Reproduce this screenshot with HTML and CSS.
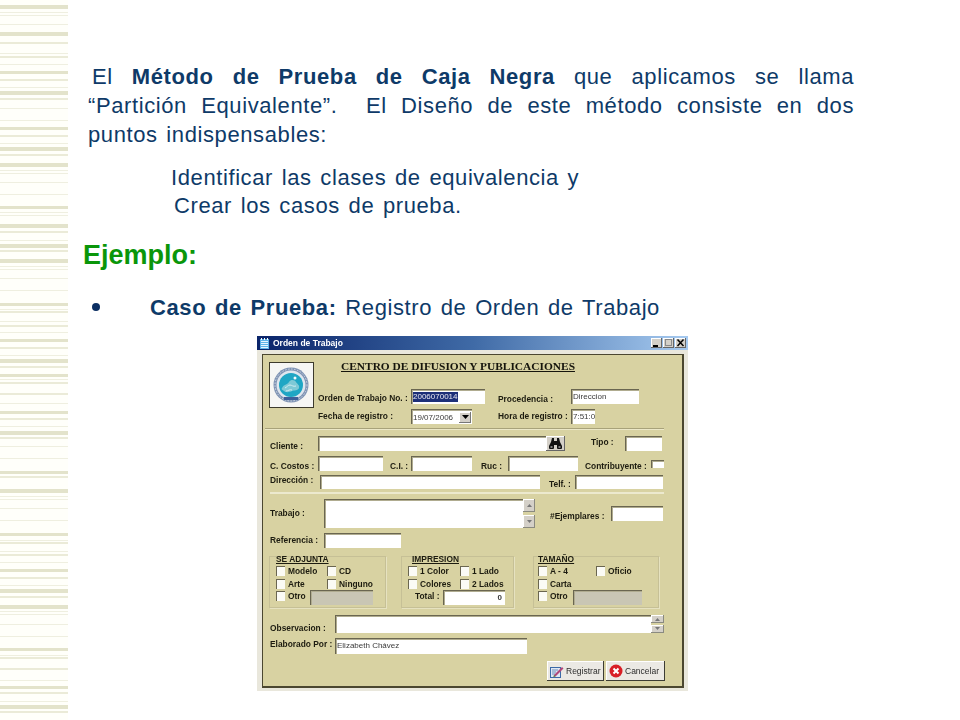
FILE: index.html
```html
<!DOCTYPE html>
<html lang="es">
<head>
<meta charset="utf-8">
<title>Partición Equivalente</title>
<link rel="stylesheet" href="styles.css">
</head>
<body>
<div class="slide">
  <svg class="stripes" width="68" height="720" viewBox="0 0 68 720" shape-rendering="crispEdges" aria-hidden="true">
    <g fill="#e3e3cb">
      <rect y="5" width="68" height="4"/><rect y="32" width="68" height="4"/><rect y="91" width="68" height="4"/><rect y="147" width="68" height="4"/><rect y="163" width="68" height="4"/><rect y="224" width="68" height="4"/><rect y="244" width="68" height="4"/><rect y="259" width="68" height="4"/><rect y="359" width="68" height="4"/><rect y="431" width="68" height="4"/><rect y="489" width="68" height="4"/><rect y="589" width="68" height="4"/><rect y="605" width="68" height="4"/><rect y="705" width="68" height="4"/>
      <rect y="71" width="68" height="3"/><rect y="127" width="68" height="3"/><rect y="206" width="68" height="3"/><rect y="303" width="68" height="3"/><rect y="339" width="68" height="3"/><rect y="374" width="68" height="3"/><rect y="411" width="68" height="3"/><rect y="471" width="68" height="3"/><rect y="533" width="68" height="3"/><rect y="569" width="68" height="3"/><rect y="648" width="68" height="3"/><rect y="686" width="68" height="3"/>
    </g>
    <g fill="#ebebd8">
      <rect y="42" width="68" height="2"/><rect y="56" width="68" height="2"/><rect y="79" width="68" height="2"/><rect y="98" width="68" height="2"/><rect y="135" width="68" height="2"/><rect y="154" width="68" height="2"/><rect y="231" width="68" height="2"/><rect y="250" width="68" height="2"/><rect y="311" width="68" height="2"/><rect y="325" width="68" height="2"/><rect y="347" width="68" height="2"/><rect y="366" width="68" height="2"/><rect y="382" width="68" height="2"/><rect y="393" width="68" height="2"/><rect y="418" width="68" height="2"/><rect y="437" width="68" height="2"/><rect y="476" width="68" height="2"/><rect y="542" width="68" height="2"/><rect y="554" width="68" height="2"/><rect y="577" width="68" height="2"/><rect y="596" width="68" height="2"/><rect y="657" width="68" height="2"/><rect y="668" width="68" height="2"/><rect y="692" width="68" height="2"/><rect y="711" width="68" height="2"/>
    </g>
    <g fill="#efefe0">
      <rect y="12" width="68" height="1"/><rect y="15" width="68" height="1"/><rect y="24" width="68" height="1"/><rect y="53" width="68" height="1"/><rect y="64" width="68" height="1"/><rect y="87" width="68" height="1"/><rect y="108" width="68" height="1"/><rect y="120" width="68" height="1"/><rect y="143" width="68" height="1"/><rect y="170" width="68" height="1"/><rect y="173" width="68" height="1"/><rect y="182" width="68" height="1"/><rect y="194" width="68" height="1"/><rect y="212" width="68" height="1"/><rect y="215" width="68" height="1"/><rect y="240" width="68" height="1"/><rect y="266" width="68" height="1"/><rect y="269" width="68" height="1"/><rect y="278" width="68" height="1"/><rect y="290" width="68" height="1"/><rect y="309" width="68" height="1"/><rect y="321" width="68" height="1"/><rect y="332" width="68" height="1"/><rect y="355" width="68" height="1"/><rect y="379" width="68" height="1"/><rect y="403" width="68" height="1"/><rect y="426" width="68" height="1"/><rect y="446" width="68" height="1"/><rect y="458" width="68" height="1"/><rect y="496" width="68" height="1"/><rect y="499" width="68" height="1"/><rect y="508" width="68" height="1"/><rect y="520" width="68" height="1"/><rect y="540" width="68" height="1"/><rect y="551" width="68" height="1"/><rect y="562" width="68" height="1"/><rect y="585" width="68" height="1"/><rect y="611" width="68" height="1"/><rect y="614" width="68" height="1"/><rect y="624" width="68" height="1"/><rect y="636" width="68" height="1"/><rect y="655" width="68" height="1"/><rect y="680" width="68" height="1"/><rect y="701" width="68" height="1"/>
    </g>
  </svg>

  <main class="content">
    <div class="intro">
      <p class="line first">El <b>Método de Prueba de Caja Negra</b> que aplicamos se llama</p>
      <p class="line">“Partición Equivalente”.&nbsp; El Diseño de este método consiste en dos</p>
      <p class="line last">puntos indispensables:</p>
    </div>
    <div class="steps">
      <p>Identificar las clases de equivalencia y</p>
      <p class="step-two">Crear los casos de prueba.</p>
    </div>
    <h2 class="example">Ejemplo:</h2>
    <div class="case">
      <span class="bullet"></span>
      <p><b>Caso de Prueba:</b> Registro de Orden de Trabajo</p>
    </div>

    <section class="window">
      <header class="titlebar">
        <svg class="app-icon" width="9" height="11" viewBox="0 0 9 11" aria-hidden="true">
          <rect x="0" y="1" width="9" height="10" fill="#5fb4e8"/>
          <path d="M1 3.5h7M1 5.5h7M1 7.5h7M1 9.5h7" stroke="#e8f6ff" stroke-width="1"/>
          <path d="M1.5 0v2M4.5 0v2M7.5 0v2" stroke="#fff" stroke-width="1"/>
        </svg>
        <span class="title-text">Orden de Trabajo</span>
        <span class="win-buttons">
          <span class="win-btn"><svg width="11" height="10" viewBox="0 0 11 10"><path d="M2 8h5" stroke="#000" stroke-width="2"/></svg></span>
          <span class="win-btn"><svg width="11" height="10" viewBox="0 0 11 10"><rect x="2.5" y="1.5" width="6" height="6" fill="none" stroke="#8a8a8a"/></svg></span>
          <span class="win-btn"><svg width="11" height="10" viewBox="0 0 11 10"><path d="M2.5 1.5l6 6.5M8.5 1.5l-6 6.500" stroke="#000" stroke-width="1.500"/></svg></span>
        </span>
      </header>

      <div class="panel">
        <div class="head">
          <div class="logo">
            <svg width="41" height="42" viewBox="0 0 41 42" aria-hidden="true">
              <circle cx="20" cy="21" r="17.500" fill="#7f94b4"/>
              <circle cx="20" cy="21" r="14.500" fill="#dfe6ee"/>
              <circle cx="20" cy="21" r="12" fill="#1fa6c4"/>
              <circle cx="20" cy="21" r="16" fill="none" stroke="#d4dae6" stroke-width="1" stroke-dasharray="1.500 1.500"/>
              <path d="M11 24c2-4 5-3 7-6s6-2 7 0 4 3 3 6-5 2-7 3-6 2-8 0-3-1-2-3z" fill="#7fc9d6"/>
              <path d="M14 24c2-1 3-3 5-3s3 2 6 1M15 27c2 0 4-2 6-1" stroke="#d2eef2" stroke-width="1" fill="none"/>
              <circle cx="24" cy="14" r="1.500" fill="#f2fafb"/>
              <rect x="13" y="33" width="14" height="3" fill="#3d5f9a"/>
            </svg>
          </div>
          <div class="head-main">
            <h3 class="org">CENTRO DE DIFUSION Y PUBLICACIONES</h3>
            <div class="row row-order">
              <label class="down-1">Orden de Trabajo No. :</label>
              <span class="field"><span class="selected">2006070014</span></span>
              <label class="pad-13 down-2">Procedencia :</label>
              <span class="field">Direccion</span>
            </div>
            <div class="row row-date">
              <label class="up-1">Fecha de registro :</label>
              <span class="field combo">19/07/2006<span class="arrow-btn"><svg width="7" height="4" viewBox="0 0 7 4"><path d="M0 0h7L3.500 4z" fill="#000"/></svg></span></span>
              <label class="pad-26 up-1">Hora de registro :</label>
              <span class="field">7:51:0</span>
            </div>
          </div>
        </div>
        <div class="sep"></div>

        <div class="body">
          <div class="row row-client">
            <label class="down-2">Cliente :</label>
            <span class="field"></span>
            <span class="btn-find">
              <svg width="13" height="11" viewBox="0 0 13 11" aria-hidden="true">
                <path d="M3 0h2v3h3V0h2l1 4 2 4v2a1 1 0 0 1-1 1H9a1 1 0 0 1-1-1V7H5v3a1 1 0 0 1-1 1H1a1 1 0 0 1-1-1V8l2-4z" fill="#111"/>
                <path d="M1.500 9h2M9.500 9h2" stroke="#eee" stroke-width="1"/>
              </svg>
            </span>
            <label class="pad-26 up-2">Tipo :</label>
            <span class="field"></span>
          </div>
          <div class="row row-costs">
            <label class="down-2">C. Costos :</label>
            <span class="field"></span>
            <label class="pad-7 down-2">C.I. :</label>
            <span class="field"></span>
            <label class="pad-9 down-2">Ruc :</label>
            <span class="field"></span>
            <label class="pad-7 down-2">Contribuyente :</label>
            <span class="field tiny"></span>
          </div>
          <div class="row row-address">
            <label class="up-2">Dirección :</label>
            <span class="field"></span>
            <label class="pad-9 down-2">Telf. :</label>
            <span class="field"></span>
          </div>
          <div class="sep-light"></div>
          <div class="row row-work">
            <label class="up-1">Trabajo :</label>
            <span class="field"></span>
            <span class="scroll">
              <span class="scroll-btn"><svg width="5" height="3" viewBox="0 0 5 3"><path d="M0 3h5L2.500 0z" fill="#777"/></svg></span>
              <span class="scroll-btn"><svg width="5" height="3" viewBox="0 0 5 3"><path d="M0 0h5L2.500 3z" fill="#777"/></svg></span>
            </span>
            <label class="pad-15 down-2">#Ejemplares :</label>
            <span class="field short"></span>
          </div>
          <div class="row row-ref">
            <label class="up-1">Referencia :</label>
            <span class="field"></span>
          </div>

          <div class="groups">
            <fieldset class="group group-a">
              <div class="group-title">SE ADJUNTA</div>
              <div class="opts"><span class="opt col"><i class="cb"></i>Modelo</span><span class="opt"><i class="cb"></i>CD</span></div>
              <div class="opts"><span class="opt col"><i class="cb"></i>Arte</span><span class="opt"><i class="cb"></i>Ninguno</span></div>
              <div class="opts"><span class="opt other"><i class="cb"></i>Otro</span><span class="field grey"></span></div>
            </fieldset>
            <fieldset class="group group-b">
              <div class="group-title">IMPRESION</div>
              <div class="opts"><span class="opt col"><i class="cb"></i>1 Color</span><span class="opt"><i class="cb"></i>1 Lado</span></div>
              <div class="opts"><span class="opt col"><i class="cb"></i>Colores</span><span class="opt"><i class="cb"></i>2 Lados</span></div>
              <div class="opts"><span class="opt total">Total :</span><span class="field number">0</span></div>
            </fieldset>
            <fieldset class="group group-c">
              <div class="group-title">TAMAÑO</div>
              <div class="opts"><span class="opt col"><i class="cb"></i>A - 4</span><span class="opt"><i class="cb"></i>Oficio</span></div>
              <div class="opts"><span class="opt col"><i class="cb"></i>Carta</span></div>
              <div class="opts"><span class="opt other"><i class="cb"></i>Otro</span><span class="field grey"></span></div>
            </fieldset>
          </div>

          <div class="row row-notes">
            <label class="down-4">Observacion :</label>
            <span class="field"></span>
            <span class="scroll">
              <span class="scroll-btn"><svg width="5" height="3" viewBox="0 0 5 3"><path d="M0 3h5L2.500 0z" fill="#777"/></svg></span>
              <span class="scroll-btn"><svg width="5" height="3" viewBox="0 0 5 3"><path d="M0 0h5L2.500 3z" fill="#777"/></svg></span>
            </span>
          </div>
          <div class="row row-author">
            <label class="up-2">Elaborado Por :</label>
            <span class="field">Elizabeth Chávez</span>
          </div>
          <div class="actions">
            <span class="action action-save">
              <svg width="14" height="13" viewBox="0 0 14 13" aria-hidden="true">
                <rect x="0.500" y="2.500" width="10" height="10" fill="#dfe8f4" stroke="#3c6aa8"/>
                <path d="M2 5h6M2 7h4M2 9h3" stroke="#6f8fbb"/>
                <path d="M4 10L12 2l1.500 1.500-8 8-2 .5z" fill="#b0487a"/>
                <path d="M4 10l-.5 2 2-.5z" fill="#4d9b3c"/>
              </svg>
              Registrar
            </span>
            <span class="action action-cancel">
              <svg width="14" height="14" viewBox="0 0 14 14" aria-hidden="true">
                <circle cx="7" cy="7" r="6.500" fill="#d81f26"/>
                <path d="M4.500 4.500l5 5M9.500 4.500l-5 5" stroke="#fff" stroke-width="2"/>
              </svg>
              Cancelar
            </span>
          </div>
        </div>
      </div>
    </section>
  </main>
</div>
</body>
</html>
```

FILE: styles.css
```css
* { box-sizing: border-box; }

html, body { margin: 0; padding: 0; }

body {
  background: #fff;
  color: #0e3a68;
  font-family: "Liberation Sans", Arial, sans-serif;
  overflow: hidden;
}

p, h2, h3 { margin: 0; }

.slide {
  display: flex;
  width: 960px;
  height: 720px;
}

.stripes {
  display: block;
  flex: none;
  background: #fffffa;
}

.content {
  flex: 1;
  padding-top: 62px;
  font-size: 22px;
  letter-spacing: 0.6px;
  word-spacing: 2px;
}

/* slide text */
.intro {
  margin-left: 20px;
  width: 766px;
}

.line {
  height: 29px;
  line-height: 29px;
  text-align: justify;
  text-align-last: justify;
}

.line.first { padding-left: 4px; }
.line.last { text-align-last: left; }

.steps {
  margin: 15px 0 0 103px;
  line-height: 28px;
}

.step-two { padding-left: 3px; }

.example {
  margin: 20px 0 0 15px;
  color: #0a960a;
  font-size: 27px;
  letter-spacing: 0;
  line-height: 30px;
}

.case {
  display: flex;
  align-items: center;
  margin-top: 24px;
  height: 28px;
  line-height: 28px;
}

.bullet {
  flex: none;
  width: 8px;
  height: 8px;
  margin: -2px 50px 0 24px;
  border-radius: 50%;
  background: #0c2f63;
}

/* screenshot of the form */
.window {
  width: 431px;
  height: 355px;
  margin: 14px 0 0 189px;
  background: #e9e7dc;
  color: #1d1c10;
  font-size: 8.400px;
  letter-spacing: 0;
  word-spacing: 0;
  filter: blur(0.3px);
}

.titlebar {
  display: flex;
  align-items: center;
  height: 14px;
  padding: 0 2px 0 3px;
  background: linear-gradient(90deg, #0a246a 0%, #3f6aa6 50%, #a6caf0 100%);
  color: #fff;
  font-size: 8.500px;
  font-weight: bold;
}

.app-icon { flex: none; }

.title-text { margin-left: 4px; }

.win-buttons {
  display: flex;
  gap: 1px;
  margin-left: auto;
}

.win-btn {
  display: flex;
  width: 11px;
  height: 10px;
  background: #d4d0c8;
  box-shadow: inset -1px -1px #666, inset 1px 1px #fff;
}

.panel {
  width: 422px;
  height: 334px;
  margin: 4px 0 0 5px;
  border: 1px solid #4b4730;
  border-width: 1px 2px 2px 1px;
  background: #d8d2a2;
}

.head { display: flex; padding-left: 6px; }

.logo {
  display: flex;
  align-items: center;
  justify-content: center;
  flex: none;
  width: 45px;
  height: 46px;
  margin-top: 7px;
  border: 1px solid #3c3a2c;
  background: #f6f6f4;
}

.head-main { margin-left: 4px; }

.org {
  margin: 5px 0 0 23px;
  color: #15140c;
  font-family: "Liberation Serif", "Times New Roman", serif;
  font-size: 11.400px;
  line-height: 12px;
  text-decoration: underline;
  white-space: nowrap;
}

.row {
  display: grid;
  align-items: center;
}

label {
  font-weight: bold;
  white-space: nowrap;
}

.pad-7 { padding-left: 7px; }
.pad-9 { padding-left: 9px; }
.pad-13 { padding-left: 13px; }
.pad-15 { padding-left: 15px; }
.pad-26 { padding-left: 26px; }

/* labels sit a little off the centre of their field; the row centres
   them, so a margin shifts them by half its value */
.down-1 { margin-top: 2px; }
.down-2 { margin-top: 4px; }
.down-4 { margin-top: 8px; }
.up-1 { margin-top: -2px; }
.up-2 { margin-top: -4px; }

.field {
  display: block;
  height: 100%;
  overflow: hidden;
  border-style: solid;
  border-width: 1px 0 0 1px;
  border-color: #6a6650;
  box-shadow: inset 1px 1px #b0ac90;
  background: #ffffff;
  color: #3a3a3a;
  font-size: 8px;
  font-weight: normal;
  line-height: 13px;
  padding-left: 1px;
  white-space: nowrap;
}

.selected {
  display: inline-block;
  background: #1d2f78;
  color: #e8e8f0;
  line-height: 10px;
}

.row-order {
  grid-template-columns: 93px 74px 86px 68px;
  height: 15px;
  margin-top: 17px;
}

.row-date {
  grid-template-columns: 93px 61px 99px 24px;
  height: 15px;
  margin-top: 5px;
}

.combo {
  display: flex;
  justify-content: space-between;
  align-items: center;
  padding-right: 1px;
}

.arrow-btn {
  display: flex;
  align-items: center;
  justify-content: center;
  width: 12px;
  height: 11px;
  background: #d4d0c8;
  box-shadow: inset -1px -1px #777, inset 1px 1px #fff;
}

.sep {
  width: 399px;
  height: 2px;
  margin: 4px 0 0 2px;
  border-top: 1px solid #a8a27a;
  border-bottom: 1px solid #ece8c8;
}

.body { padding-left: 7px; }

.row-client {
  grid-template-columns: 48px 228px 19px 60px 37px;
  height: 15px;
  margin-top: 6px;
}

.btn-find {
  display: flex;
  align-items: center;
  justify-content: center;
  height: 100%;
  background: #d4d0c8;
  box-shadow: inset -1px -1px #666, inset 1px 1px #fff;
}

.row-costs {
  grid-template-columns: 48px 65px 28px 61px 36px 70px 73px 13px;
  height: 15px;
  margin-top: 5px;
}

.tiny { height: 8px; }

.row-address {
  grid-template-columns: 50px 220px 35px 88px;
  height: 14px;
  margin-top: 4px;
}

.sep-light {
  width: 394px;
  height: 2px;
  margin-top: 3px;
  background: #ece9ce;
}

.row-work {
  grid-template-columns: 54px 199px 12px 76px 52px;
  height: 29px;
  margin-top: 5px;
}

.short { height: 15px; }

.scroll {
  display: flex;
  flex-direction: column;
  justify-content: space-between;
  height: 100%;
}

.scroll-btn {
  display: flex;
  align-items: center;
  justify-content: center;
  height: 45%;
  background: #d4d0c8;
  box-shadow: inset -1px -1px #8a8a80, inset 1px 1px #fff;
}

.row-ref {
  grid-template-columns: 54px 77px;
  height: 15px;
  margin-top: 5px;
}

.groups {
  display: flex;
  height: 52px;
  margin: 8px 0 0 -1px;
}

.group {
  min-width: 0;
  margin: 0;
  padding: 0 0 0 6px;
  border: 1px solid #c6c096;
  box-shadow: 1px 1px #e6e2c0;
  font-weight: bold;
}

.group-a { width: 117px; }
.group-b { width: 113px; margin-left: 15px; }
.group-c { width: 126px; margin-left: 19px; padding-left: 4px; }

.group-title {
  height: 9px;
  line-height: 5px;
  text-decoration: underline;
}

.group-b .group-title { margin-left: 4px; }

.opts {
  display: flex;
  height: 12.500px;
}

.opt {
  display: flex;
  align-items: flex-start;
  gap: 3px;
  line-height: 10px;
  white-space: nowrap;
}

.cb {
  flex: none;
  width: 9px;
  height: 10px;
  border-style: solid;
  border-width: 1px 0 0 1px;
  border-color: #6a6650;
  background: #fbfbf5;
}

.col { width: 51px; }
.group-b .col { width: 52px; }
.group-c .col { width: 58px; }

.other { width: 34px; }
.group-c .other { width: 35px; }

.grey {
  flex: none;
  width: 63px;
  height: 15px;
  margin-top: -1px;
  background: #c9c6b4;
}

.group-c .grey { width: 69px; }

.total {
  width: 35px;
  padding-left: 7px;
}

.number {
  flex: none;
  width: 62px;
  height: 15px;
  margin-top: -1px;
  padding-right: 3px;
  font-weight: bold;
  text-align: right;
}

.row-notes {
  grid-template-columns: 65px 316px 13px;
  height: 18px;
  margin-top: 7px;
}

.row-author {
  grid-template-columns: 65px 192px;
  height: 16px;
  margin-top: 5px;
}

.actions {
  display: flex;
  gap: 2px;
  height: 20px;
  margin: 7px 0 0 277px;
}

.action {
  display: flex;
  align-items: center;
  gap: 2px;
  height: 100%;
  padding-left: 3px;
  background: #ebe9e4;
  box-shadow: inset -1px -1px #3c3c34, inset 1px 1px #fff;
  color: #2c2c2c;
  font-size: 8.500px;
}

.action-save { width: 57px; }
.action-cancel { width: 59px; }
```
